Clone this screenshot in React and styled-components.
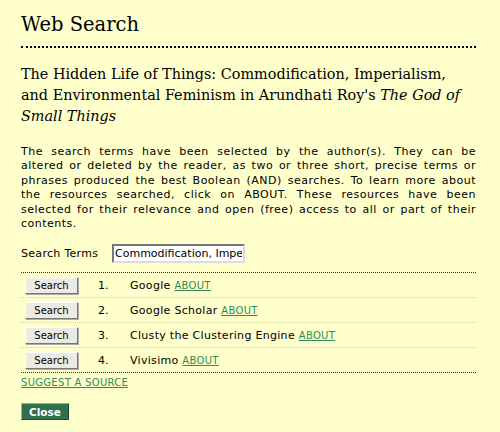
import styled, { createGlobalStyle } from 'styled-components';

const GlobalStyle = createGlobalStyle`
  html, body {
    margin: 0;
    padding: 0;
    background: #ffffcc;
  }
  body {
    font-family: "DejaVu Sans", Verdana, sans-serif;
    color: #000;
  }
`;

const engines = [
  { num: '1.', name: 'Google' },
  { num: '2.', name: 'Google Scholar' },
  { num: '3.', name: 'Clusty the Clustering Engine' },
  { num: '4.', name: 'Vivisimo' },
];

const App = () => {
  return (
    <>
      <GlobalStyle />
      <Page>
        <Heading>Web Search</Heading>
        <ArticleTitle>
          The Hidden Life of Things: Commodification, Imperialism, and Environmental Feminism in
          Arundhati Roy's <em>The God of Small Things</em>
        </ArticleTitle>
        <Intro>
          The search terms have been selected by the author(s). They can be altered or deleted by
          the reader, as two or three short, precise terms or phrases produced the best Boolean
          (AND) searches. To learn more about the resources searched, click on ABOUT. These
          resources have been selected for their relevance and open (free) access to all or part
          of their contents.
        </Intro>
        <TermsRow>
          <TermsLabel>Search Terms</TermsLabel>
          <TermsInput defaultValue="Commodification, Imperialism" />
        </TermsRow>
        <EngineList>
          {engines.map((e, i) => (
            <EngineRow key={e.num} last={i === engines.length - 1}>
              <SearchButton type="button">Search</SearchButton>
              <Num>{e.num}</Num>
              <EngineName>
                {e.name} <SmallLink href="#">About</SmallLink>
              </EngineName>
            </EngineRow>
          ))}
        </EngineList>
        <SuggestLink href="#">Suggest a source</SuggestLink>
        <CloseButton type="button">Close</CloseButton>
      </Page>
    </>
  );
};

export default App;

const Page = styled.div`
  padding: 12px 24px 12px 21px;
  display: flex;
  flex-direction: column;
  align-items: flex-start;
`;

const Heading = styled.h1`
  align-self: stretch;
  margin: 0;
  font-family: "DejaVu Serif", Georgia, serif;
  font-weight: normal;
  font-size: 19.5px;
  line-height: 26px;
  padding-bottom: 8px;
  border-bottom: 2px dotted #000;
`;

const ArticleTitle = styled.h2`
  margin: 16px 0 0;
  font-family: "DejaVu Serif", Georgia, serif;
  font-weight: normal;
  font-size: 14.4px;
  line-height: 21px;
`;

const Intro = styled.p`
  margin: 18px 0 0;
  font-size: 11px;
  letter-spacing: 0.5px;
  word-spacing: 0.5px;
  line-height: 14.4px;
  text-align: justify;
`;

const TermsRow = styled.div`
  align-self: stretch;
  display: flex;
  align-items: center;
  gap: 12px;
  margin-top: 13px;
  padding-bottom: 9px;
  border-bottom: 1px dotted #333;
`;

const TermsLabel = styled.span`
  font-size: 11px;
  letter-spacing: 0.3px;
  width: 79px;
`;

const TermsInput = styled.input`
  width: 127px;
  height: 13px;
  padding: 1px 1px;
  font-family: "DejaVu Sans", Verdana, sans-serif;
  font-size: 11px;
  background: #fff;
  border: 2px solid;
  border-color: #777 #ddd #ddd #777;
  outline: none;
`;

const EngineList = styled.div`
  align-self: stretch;
  display: flex;
  flex-direction: column;
`;

const EngineRow = styled.div`
  display: flex;
  align-items: center;
  height: 24px;
  padding-left: 4px;
  border-bottom: 1px dotted ${({ last }) => (last ? '#333' : '#ccc')};
`;

const SearchButton = styled.button`
  width: 53px;
  height: 17px;
  padding: 0;
  font-family: "DejaVu Sans", Verdana, sans-serif;
  font-size: 10px;
  color: #000;
  background: #ebebe4;
  border: 1px solid;
  border-color: #fff #777 #777 #fff;
  box-shadow: 1px 1px 0 #aaa;
`;

const Num = styled.span`
  width: 32px;
  padding-left: 20px;
  font-size: 11px;
`;

const EngineName = styled.span`
  font-size: 11px;
  letter-spacing: 0.3px;
`;

const SmallLink = styled.a`
  font-size: 10px;
  letter-spacing: 0.3px;
  text-transform: uppercase;
  color: #2e8b57;
  text-decoration: underline;
`;

const SuggestLink = styled(SmallLink)`
  margin-top: 4px;
`;

const CloseButton = styled.button`
  margin-top: 15px;
  width: 48px;
  height: 17px;
  padding: 0;
  font-family: "DejaVu Sans", Verdana, sans-serif;
  font-size: 10.5px;
  font-weight: bold;
  color: #fff;
  background: #2e7050;
  border: 1px solid;
  border-color: #8fb8a0 #1c4a33 #1c4a33 #8fb8a0;
`;
